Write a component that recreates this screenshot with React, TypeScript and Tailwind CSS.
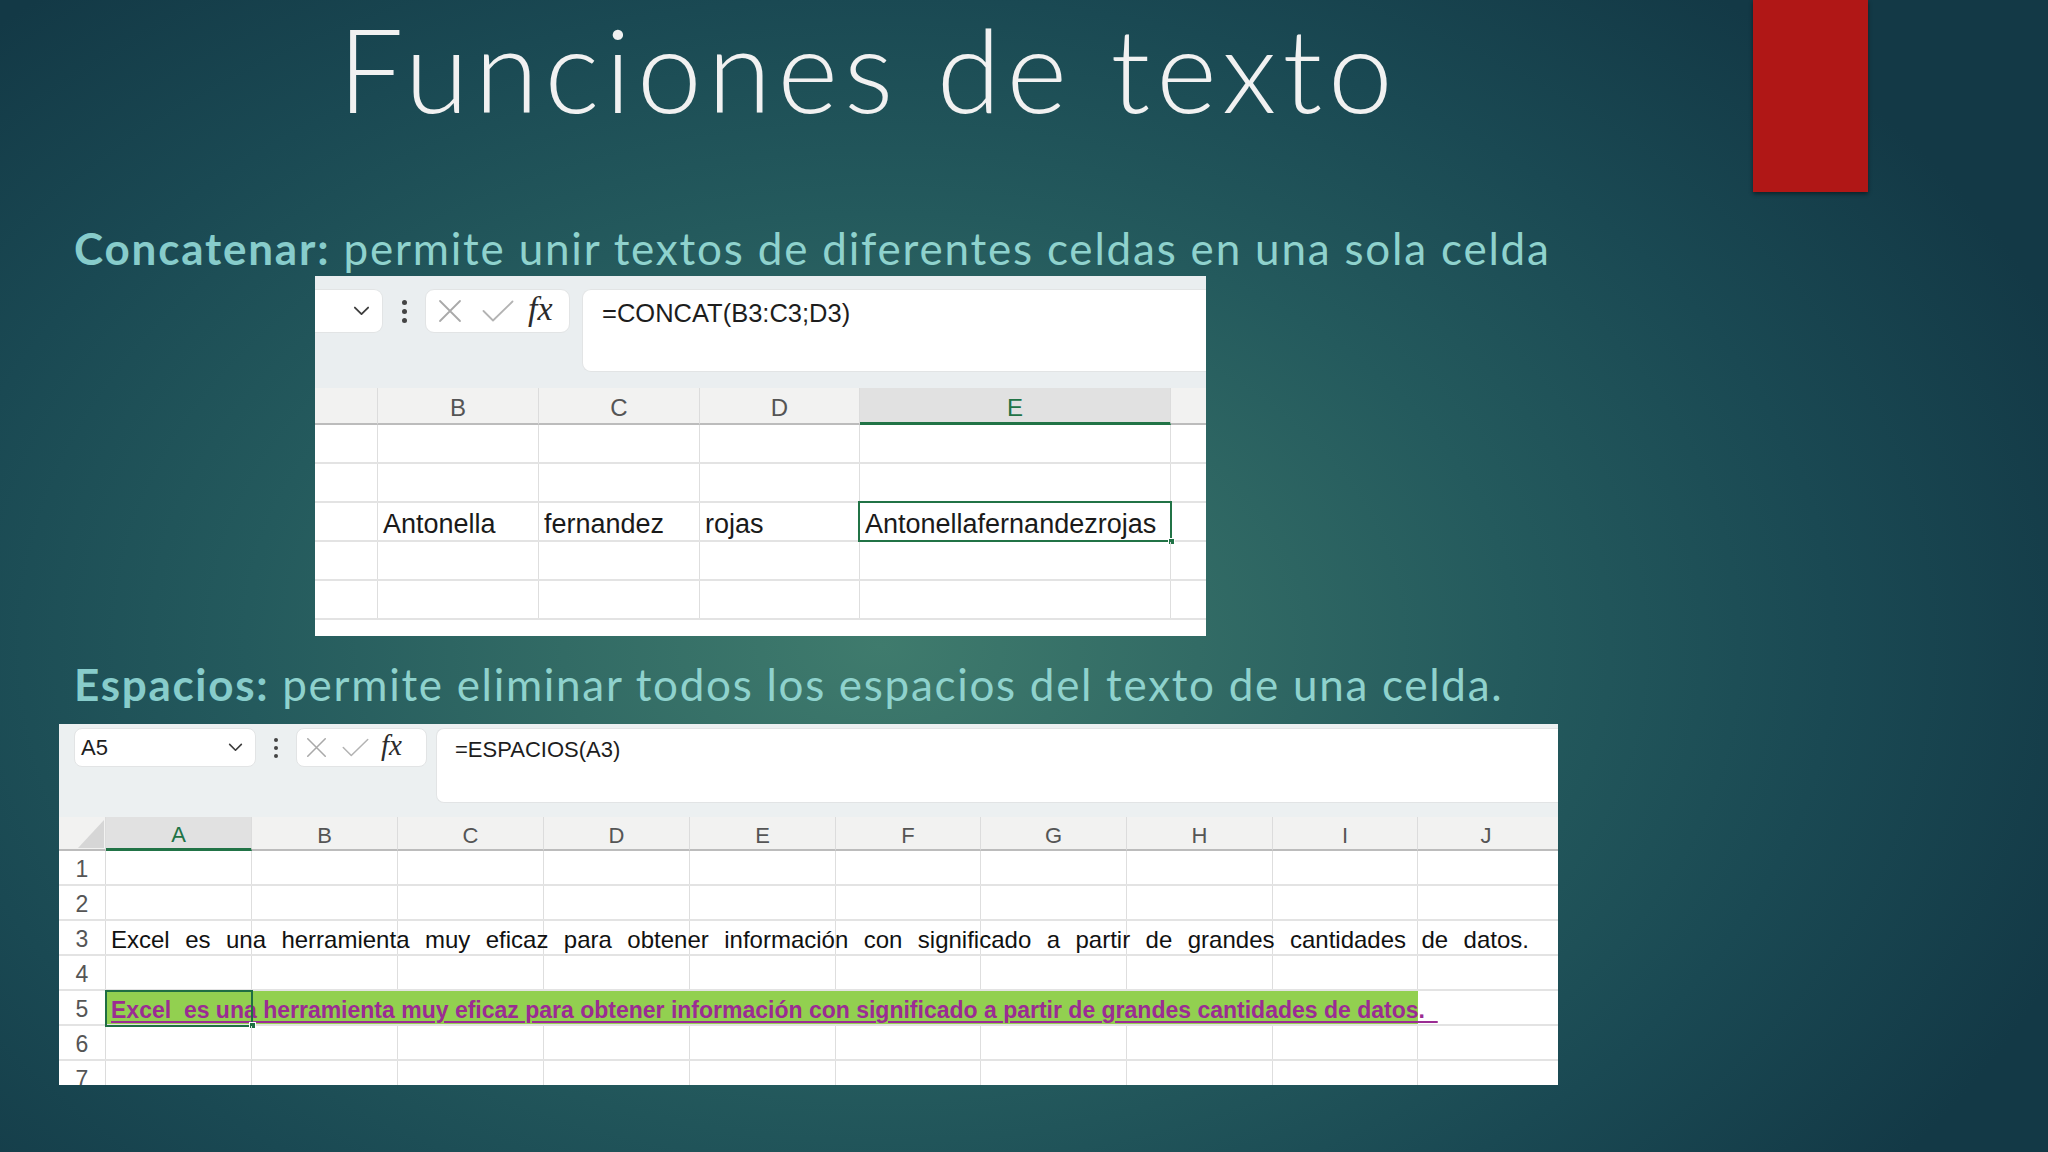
import React from 'react';

function Chevron({ w = 16 }: { w?: number }) {
  return (
    <svg width={w} height={w * 0.6} viewBox="0 0 16 10" fill="none">
      <path d="M1.5 1.5 L8 8 L14.5 1.5" stroke="#3d3d3d" strokeWidth="1.8" strokeLinecap="round" strokeLinejoin="round" />
    </svg>
  );
}

function Dots({ s = 5, gap = 4 }: { s?: number; gap?: number }) {
  return (
    <svg width={s} height={s * 3 + gap * 2} viewBox={`0 0 ${s} ${s * 3 + gap * 2}`}>
      <circle cx={s / 2} cy={s / 2} r={s / 2} fill="#444" />
      <circle cx={s / 2} cy={s * 1.5 + gap} r={s / 2} fill="#444" />
      <circle cx={s / 2} cy={s * 2.5 + gap * 2} r={s / 2} fill="#444" />
    </svg>
  );
}

function XIcon({ size }: { size: number }) {
  return (
    <svg width={size} height={size} viewBox="0 0 24 24" fill="none">
      <path d="M2 2 L22 22 M22 2 L2 22" stroke="#a9a9a9" strokeWidth="1.8" strokeLinecap="round" />
    </svg>
  );
}

function CheckIcon({ w, h }: { w: number; h: number }) {
  return (
    <svg width={w} height={h} viewBox="0 0 32 22" fill="none">
      <path d="M1.5 11 L11 20.5 L30.5 1.5" stroke="#b3b3b3" strokeWidth="1.8" strokeLinecap="round" strokeLinejoin="round" />
    </svg>
  );
}

function Corner() {
  return (
    <svg width="28" height="30" viewBox="0 0 28 30">
      <path d="M27 1 L27 29 L1 29 Z" fill="#d6d6d6" />
    </svg>
  );
}

function Table1() {
  const rows = [0, 1, 2, 3, 4];
  return (
    <div className="ml-[315px] mt-[6px] w-[891px] h-[360px] bg-white overflow-hidden font-['Liberation_Sans',Arial,sans-serif]">
      {/* formula area */}
      <div className="h-[112px] bg-[#eaeef0] pt-[13px] flex items-start">
        <div className="w-[68px] h-[44px] shrink-0 bg-white rounded-r-[9px] border border-l-0 border-[#e2e4e5] flex items-center justify-end pr-[12px]">
          <Chevron w={17} />
        </div>
        <div className="w-[42px] h-[44px] shrink-0 flex items-center justify-center">
          <Dots s={5} gap={4} />
        </div>
        <div className="w-[145px] h-[44px] shrink-0 bg-white rounded-[9px] border border-[#e2e4e5] flex items-center pl-[12px]">
          <XIcon size={24} />
          <div className="ml-[20px]">
            <CheckIcon w={32} h={22} />
          </div>
          <span className="ml-[14px] text-[34px] leading-none italic text-[#2b2b2b] font-['Liberation_Serif',serif] -mt-[5px]">fx</span>
        </div>
        <div className="ml-[12px] flex-1 h-[83px] bg-white rounded-l-[9px] border border-r-0 border-[#e2e4e5] pl-[19px] pt-[11px] text-[25.5px] leading-none text-[#1d1d1d]">
          =CONCAT(B3:C3;D3)
        </div>
      </div>
      {/* header */}
      <div className="flex h-[37px] text-[24px] text-[#555]">
        <div className="w-[63px] shrink-0 bg-[#f2f2f1] border-r border-[#dcdcdc] border-b-2 border-b-[#bcbcbc]" />
        <div className="w-[161px] shrink-0 bg-[#f2f2f1] border-r border-[#dcdcdc] border-b-2 border-b-[#bcbcbc] flex items-center justify-center pt-[5px]">B</div>
        <div className="w-[161px] shrink-0 bg-[#f2f2f1] border-r border-[#dcdcdc] border-b-2 border-b-[#bcbcbc] flex items-center justify-center pt-[5px]">C</div>
        <div className="w-[160px] shrink-0 bg-[#f2f2f1] border-r border-[#dcdcdc] border-b-2 border-b-[#bcbcbc] flex items-center justify-center pt-[5px]">D</div>
        <div className="w-[311px] shrink-0 bg-[#e1e1e1] border-r border-[#dcdcdc] border-b-[3px] border-b-[#217346] flex items-center justify-center pt-[5px] text-[#217346]">E</div>
        <div className="flex-1 bg-[#f2f2f1] border-b-2 border-b-[#bcbcbc]" />
      </div>
      {rows.map((r) => (
        <div key={r} className="flex h-[39px] border-b-2 border-[#e3e3e3] text-[27px] text-[#1a1a1a]">
          <div className="w-[63px] shrink-0 border-r border-[#dedede]" />
          <div className="w-[161px] shrink-0 border-r border-[#dedede] pl-[5px] leading-[43px] whitespace-nowrap">{r === 2 ? 'Antonella' : ''}</div>
          <div className="w-[161px] shrink-0 border-r border-[#dedede] pl-[5px] leading-[43px] whitespace-nowrap">{r === 2 ? 'fernandez' : ''}</div>
          <div className="w-[160px] shrink-0 border-r border-[#dedede] pl-[5px] leading-[43px] whitespace-nowrap">{r === 2 ? 'rojas' : ''}</div>
          <div className="w-[311px] shrink-0 border-r border-[#dedede] pl-[5px] leading-[43px] whitespace-nowrap relative">
            {r === 2 ? 'Antonellafernandezrojas' : ''}
            {r === 2 && (
              <>
                <div className="absolute left-[-2px] top-[-2px] right-[-2px] bottom-[-2px] border-2 border-[#217346]" />
                <div className="absolute right-[-5px] bottom-[-5px] w-[7px] h-[7px] bg-[#217346] border border-white" />
              </>
            )}
          </div>
          <div className="flex-1" />
        </div>
      ))}
    </div>
  );
}

function Table2() {
  const colW = [
    'w-[146px]',
    'w-[146px]',
    'w-[146px]',
    'w-[146px]',
    'w-[146px]',
    'w-[145px]',
    'w-[146px]',
    'w-[146px]',
    'w-[145px]',
  ];
  const letters = ['A', 'B', 'C', 'D', 'E', 'F', 'G', 'H', 'I'];
  const rows = [1, 2, 3, 4, 5, 6, 7];
  return (
    <div className="ml-[59px] mt-[18px] w-[1499px] h-[361px] bg-white overflow-hidden font-['Liberation_Sans',Arial,sans-serif]">
      {/* formula area */}
      <div className="h-[93px] bg-[#ecf0f1] pt-[4px] flex items-start">
        <div className="ml-[15px] w-[182px] h-[39px] shrink-0 bg-white rounded-[8px] border border-[#e2e4e5] flex items-center justify-between pl-[6px] pr-[12px] text-[22px] text-[#1d1d1d]">
          <span>A5</span>
          <Chevron w={15} />
        </div>
        <div className="w-[40px] h-[39px] shrink-0 flex items-center justify-center">
          <Dots s={4} gap={4} />
        </div>
        <div className="w-[131px] h-[39px] shrink-0 bg-white rounded-[8px] border border-[#e2e4e5] flex items-center pl-[9px]">
          <XIcon size={21} />
          <div className="ml-[15px]">
            <CheckIcon w={27} h={19} />
          </div>
          <span className="ml-[12px] text-[29px] leading-none italic text-[#2b2b2b] font-['Liberation_Serif',serif] -mt-[4px]">fx</span>
        </div>
        <div className="ml-[9px] flex-1 h-[75px] bg-white rounded-l-[8px] border border-r-0 border-[#e2e4e5] pl-[18px] pt-[10px] text-[22px] leading-none text-[#1d1d1d]">
          =ESPACIOS(A3)
        </div>
      </div>
      {/* header */}
      <div className="flex h-[34px] text-[22px] text-[#555]">
        <div className="w-[47px] shrink-0 bg-[#f2f2f1] border-r border-[#dcdcdc] border-b-2 border-b-[#bcbcbc] flex items-end justify-end">
          <Corner />
        </div>
        {letters.map((l, i) => (
          <div
            key={l}
            className={`${colW[i]} shrink-0 border-r border-[#dcdcdc] flex items-center justify-center pt-[4px] ${
              i === 0
                ? 'bg-[#e1e1e1] text-[#217346] border-b-[3px] border-b-[#217346]'
                : 'bg-[#f2f2f1] border-b-2 border-b-[#bcbcbc]'
            }`}
          >
            {l}
          </div>
        ))}
        <div className="flex-1 bg-[#f2f2f1] border-b-2 border-b-[#bcbcbc] flex items-center justify-center pt-[4px] pr-[4px]">J</div>
      </div>
      {rows.map((r) => (
        <div key={r} className="flex h-[35px] border-b-2 border-[#e3e3e3]">
          <div className="w-[47px] shrink-0 bg-white border-r border-[#dcdcdc] flex items-center justify-center text-[23px] text-[#555] leading-none pt-[4px]">
            {r}
          </div>
          <div className="flex-1 relative flex">
            {colW.map((w, i) => (
              <div
                key={i}
                className={`${w} shrink-0 border-r ${r === 5 ? 'bg-[#92d050] border-[#92d050]' : 'border-[#dedede]'}`}
              />
            ))}
            <div className="flex-1" />
            {r === 3 && (
              <div className="absolute left-[5px] top-0 w-[1418px] h-full text-[24px] leading-[38px] text-[#111] text-justify [text-align-last:justify]">
                Excel es una herramienta muy eficaz para obtener información con significado a partir de grandes cantidades de datos.
              </div>
            )}
            {r === 5 && (
              <>
                <div className="absolute left-[5px] top-0 h-full text-[23px] leading-[38px] font-bold text-[#9b2c93] underline decoration-[#9b2c93] decoration-[1.5px] underline-offset-[3px] whitespace-pre">
                  {'Excel  es una herramienta muy eficaz para obtener información con significado a partir de grandes cantidades de datos.  '}
                </div>
                <div className="absolute left-[-1px] top-[-1px] w-[148px] h-[37px] border-2 border-[#1f6e43]" />
                <div className="absolute left-[143px] bottom-[-5px] w-[7px] h-[7px] bg-[#1f6e43] border border-white" />
              </>
            )}
          </div>
        </div>
      ))}
    </div>
  );
}

export default function App() {
  return (
    <div className="w-[2048px] h-[1152px] overflow-hidden bg-[#174451] bg-[radial-gradient(ellipse_62%_75%_at_43%_56%,#3f7b6d_0%,#326b65_25%,#245a5d_50%,#1a4953_75%,#133946_100%)] font-['Lato',sans-serif]">
      <div className="flex h-[192px] items-start">
        <h1 className="ml-[338px] mt-[11px] text-[116px] leading-none font-light tracking-[6px] text-[#f1f1f1] whitespace-nowrap">
          Funciones de texto
        </h1>
        <div className="ml-auto mr-[180px] w-[115px] h-[192px] shrink-0 bg-[#b01716] shadow-[0_2px_4px_rgba(0,0,0,0.45)]" />
      </div>
      <p className="ml-[74px] mt-[34px] text-[44px] leading-none tracking-[1.8px] text-[#8fd2cd] whitespace-nowrap">
        <span className="font-bold text-[#87cccb]">Concatenar:</span> permite unir textos de diferentes celdas en una sola celda
      </p>
      <Table1 />
      <p className="ml-[74px] mt-[26px] text-[44px] leading-none tracking-[1.7px] text-[#8fd2cd] whitespace-nowrap">
        <span className="font-bold text-[#87cccb]">Espacios:</span> permite eliminar todos los espacios del texto de una celda.
      </p>
      <Table2 />
    </div>
  );
}
